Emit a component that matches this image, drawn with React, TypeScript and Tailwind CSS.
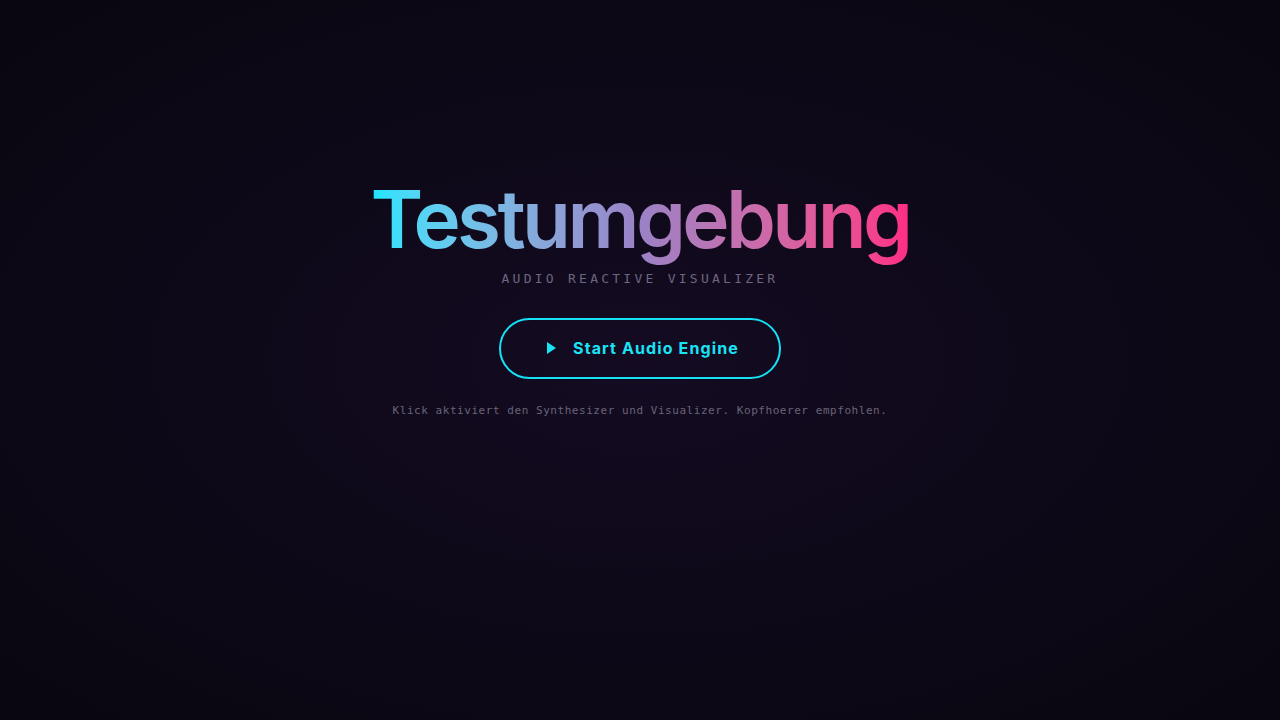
export default function App() {
  return (
    <div className="w-full h-screen overflow-hidden bg-[radial-gradient(ellipse_at_center,#140b22_0%,#0e0919_45%,#09060f_100%)] flex flex-col items-center">
      <div className="flex flex-col items-center mt-[179px]">
        <h1 className="font-['Inter','Noto_Sans',sans-serif] text-[80px] leading-none font-semibold tracking-[-0.045em] bg-gradient-to-r from-[#10e6ff] via-[#9a82c6] to-[#ff2b85] bg-clip-text text-transparent pb-3">
          Testumgebung
        </h1>
        <p className="font-['DejaVu_Sans_Mono','Liberation_Mono',monospace] mt-[-2px] text-[13px] tracking-[0.25em] text-[#6d6680] uppercase">
          Audio Reactive Visualizer
        </p>
        <button className="font-['Inter','Noto_Sans',sans-serif] mt-[29px] w-[282px] h-[61px] pl-[6px] rounded-full border-2 border-[#14e3f5] flex items-center justify-center gap-[17px] text-[#19e4f6] text-[16px] font-bold tracking-[0.07em]">
          <svg width="9" height="12" viewBox="0 0 9 12">
            <path d="M0 0 L9 6 L0 12 Z" fill="currentColor" />
          </svg>
          Start Audio Engine
        </button>
        <p className="font-['DejaVu_Sans_Mono','Liberation_Mono',monospace] mt-[24px] text-[11px] tracking-[0.05em] text-[#6a6478]">
          Klick aktiviert den Synthesizer und Visualizer. Kopfhoerer empfohlen.
        </p>
      </div>
    </div>
  );
}
